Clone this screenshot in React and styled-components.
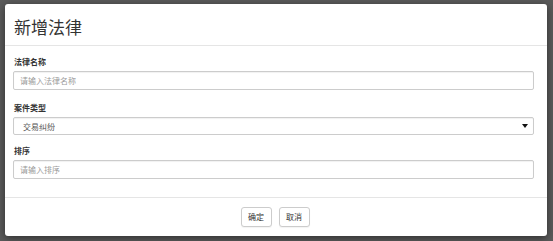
import styled, { createGlobalStyle } from "styled-components";

const GlobalStyle = createGlobalStyle`
    html, body {
        margin: 0;
        padding: 0;
        background: #5b5b5b;
        font-family: "Noto Sans CJK SC", "Liberation Sans", sans-serif;
    }
`;

const Backdrop = styled.div`
    width: 553px;
    height: 241px;
    padding: 4px 6px 5px 5px;
    box-sizing: border-box;
    background: #5b5b5b;
`;

const Modal = styled.div`
    height: 100%;
    display: flex;
    flex-direction: column;
    background: #fff;
    border-radius: 3px;
    box-shadow: 0 2px 8px rgba(0, 0, 0, 0.5);
`;

const Header = styled.div`
    height: 42px;
    display: flex;
    align-items: center;
    padding: 3px 9px 0;
    border-bottom: 1px solid #e5e5e5;
    box-sizing: border-box;
`;

const Title = styled.h4`
    margin: 0;
    font-size: 17px;
    font-weight: 400;
    color: #333;
`;

const Body = styled.div`
    flex: 1;
    padding: 9px 13px 0 8px;
    display: flex;
    flex-direction: column;
`;

const Group = styled.div`
    display: flex;
    flex-direction: column;
    margin-bottom: ${(p) => p.$gap || 9}px;
`;

const Label = styled.label`
    font-size: 8px;
    font-weight: 700;
    color: #333;
    line-height: 14px;
    margin-bottom: 2px;
    padding-left: 1px;
`;

const Field = styled.div`
    height: ${(p) => (p.$select ? 18 : 19)}px;
    border: 1px solid #ccc;
    border-radius: 2px;
    box-sizing: border-box;
    display: flex;
    align-items: center;
    justify-content: space-between;
    padding: ${(p) => (p.$select ? "0 5px 0 9px" : "0 6px")};
    font-size: 8px;
    color: ${(p) => (p.$placeholder ? "#9a9a9a" : "#555")};
    box-shadow: inset 0 1px 1px rgba(0, 0, 0, 0.06);
`;

const Arrow = styled.span`
    width: 0;
    height: 0;
    border-left: 3px solid transparent;
    border-right: 3px solid transparent;
    border-top: 4px solid #111;
`;

const Footer = styled.div`
    height: 39px;
    border-top: 1px solid #e5e5e5;
    box-sizing: border-box;
    display: flex;
    align-items: center;
    justify-content: center;
    gap: 7px;
    padding-bottom: 1px;
    padding-right: 2px;
`;

const Button = styled.button`
    height: 20px;
    width: 31px;
    padding: 0;
    font-family: inherit;
    font-size: 8px;
    color: #333;
    background: #fff;
    border: 1px solid #ccc;
    border-radius: 3px;
    box-shadow: 0 1px 1px rgba(0, 0, 0, 0.05);
`;

export default function App() {
    return (
        <>
            <GlobalStyle />
            <Backdrop>
                <Modal>
                    <Header>
                        <Title>新增法律</Title>
                    </Header>
                    <Body>
                        <Group $gap={11}>
                            <Label>法律名称</Label>
                            <Field $placeholder>请输入法律名称</Field>
                        </Group>
                        <Group $gap={9}>
                            <Label>案件类型</Label>
                            <Field $select>
                                <span>交易纠纷</span>
                                <Arrow />
                            </Field>
                        </Group>
                        <Group>
                            <Label>排序</Label>
                            <Field $placeholder>请输入排序</Field>
                        </Group>
                    </Body>
                    <Footer>
                        <Button>确定</Button>
                        <Button>取消</Button>
                    </Footer>
                </Modal>
            </Backdrop>
        </>
    );
}
